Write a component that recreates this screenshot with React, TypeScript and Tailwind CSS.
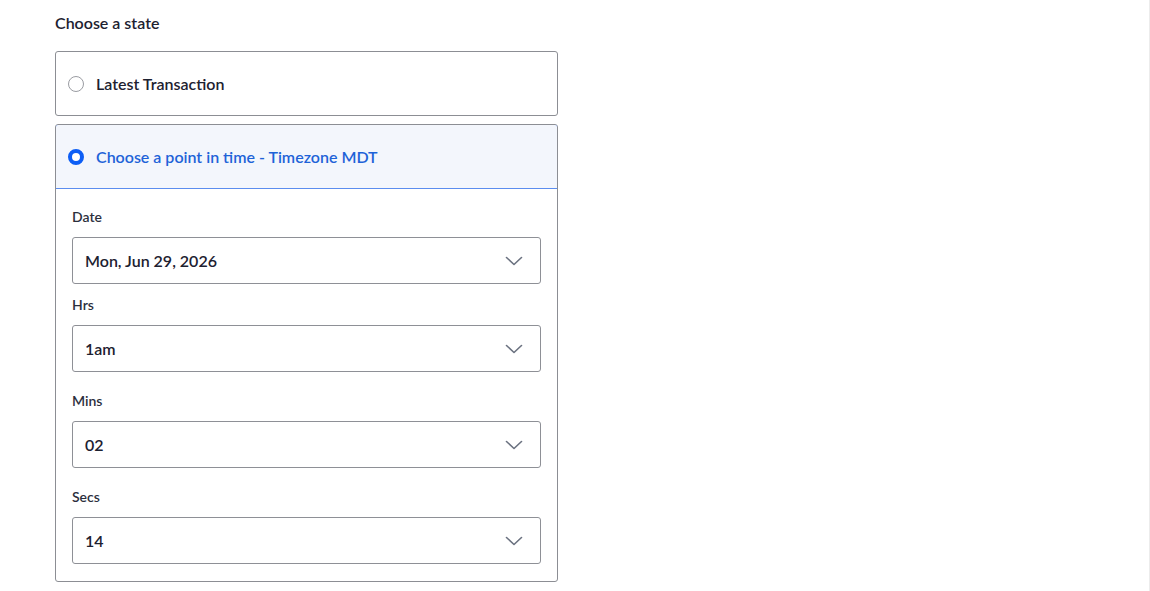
import React from "react";

const font = { fontFamily: '"Lato", "Noto Sans", sans-serif' };

function Chevron() {
  return (
    <svg width="18" height="10" viewBox="0 0 18 10" fill="none" className="shrink-0">
      <path d="M1.5 1.5 L9 8.5 L16.5 1.5" stroke="#6b7280" strokeWidth="1.6" strokeLinecap="round" strokeLinejoin="round" />
    </svg>
  );
}

function SelectField({ label, value, mt }: { label: string; value: string; mt: string }) {
  return (
    <div className={mt}>
      <div className="h-[20px] leading-[20px] text-[14px] font-semibold text-[#2b2f3d]">{label}</div>
      <div className="mt-[10px] h-[47px] w-[469px] rounded-[3px] border border-[#8e9096] bg-white flex items-center justify-between pl-[12px] pr-[17px]">
        <span className="text-[16px] font-semibold text-[#1d2130]">{value}</span>
        <Chevron />
      </div>
    </div>
  );
}

export default function App() {
  return (
    <div style={font} className="w-[1150px] h-[591px] bg-white border-r border-[#ececec] overflow-hidden">
      <div className="pl-[55px] pt-[13px]">
        <div className="h-[20px] leading-[20px] text-[16px] font-semibold text-[#1d2130]">Choose a state</div>
        <div className="mt-[18px] w-[503px] h-[65px] rounded-[3px] border border-[#8c8e94] flex items-center pl-[12px] gap-[12px]">
          <span className="w-[16px] h-[16px] rounded-full border border-[#9a9ca2] bg-white shrink-0" />
          <span className="text-[16px] font-semibold text-[#1d2130]">Latest Transaction</span>
        </div>
        <div className="mt-[8px] w-[503px] rounded-[3px] border border-[#8c8e94] overflow-hidden">
          <div className="h-[65px] bg-[#f3f6fc] border border-[#5b8def] -m-px mb-0 rounded-t-[3px] flex items-center pl-[12px] gap-[12px]">
            <span className="w-[16px] h-[16px] rounded-full border-[4px] border-[#0d5ef5] bg-white shrink-0" />
            <span className="text-[16px] font-semibold text-[#1e63d8]">Choose a point in time - Timezone MDT</span>
          </div>
          <div className="pl-[16px] pt-[18px] pb-[17px]">
            <SelectField label="Date" value="Mon, Jun 29, 2026" mt="" />
            <SelectField label="Hrs" value="1am" mt="mt-[11px]" />
            <SelectField label="Mins" value="02" mt="mt-[19px]" />
            <SelectField label="Secs" value="14" mt="mt-[19px]" />
          </div>
        </div>
      </div>
    </div>
  );
}
